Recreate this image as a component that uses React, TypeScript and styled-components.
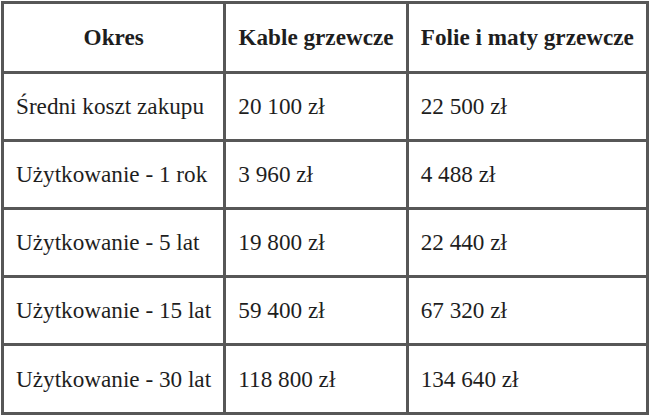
import React from 'react';
import styled, { createGlobalStyle } from 'styled-components';

const serif = `"Liberation Serif", Tinos, "Times New Roman", serif`

const GlobalStyle = createGlobalStyle`
  body {
    margin: 0;
    background: #ffffff;
  }
`

const Table = styled.table`
  font-family: ${serif};
  border-collapse: collapse;
  margin: 1px;
  width: 648px;
  color: #1e1e1e;
`

const TH = styled.th<{ $width: number }>`
  border: 3px solid #575757;
  width: ${p => p.$width}px;
  height: 67px;
  padding: 0 12px;
  font-size: 23.2px;
  font-weight: 700;
  text-align: center;
  white-space: nowrap;
`

const TD = styled.td`
  border: 3px solid #575757;
  height: 65px;
  padding: 0 12px;
  font-size: 23.2px;
  text-align: left;
  white-space: nowrap;
  tr:last-child > & {
    height: 66px;
  }
`

const cols = [
  { title: 'Okres', width: 224 },
  { title: 'Kable grzewcze', width: 180 },
  { title: 'Folie i maty grzewcze', width: 242 },
]

const rows = [
  ['Średni koszt zakupu', '20 100 zł', '22 500 zł'],
  ['Użytkowanie - 1 rok', '3 960 zł', '4 488 zł'],
  ['Użytkowanie - 5 lat', '19 800 zł', '22 440 zł'],
  ['Użytkowanie - 15 lat', '59 400 zł', '67 320 zł'],
  ['Użytkowanie - 30 lat', '118 800 zł', '134 640 zł'],
]

export default function App() {
  return (
    <>
      <GlobalStyle />
      <Table>
        <tbody>
          <tr>
            {cols.map((item, index) => <TH key={index} $width={item.width}>{item.title}</TH>)}
          </tr>
          {rows.map((row, index) =>
            <tr key={index}>
              {row.map((cell, i) => <TD key={i}>{cell}</TD>)}
            </tr>
          )}
        </tbody>
      </Table>
    </>
  )
}
